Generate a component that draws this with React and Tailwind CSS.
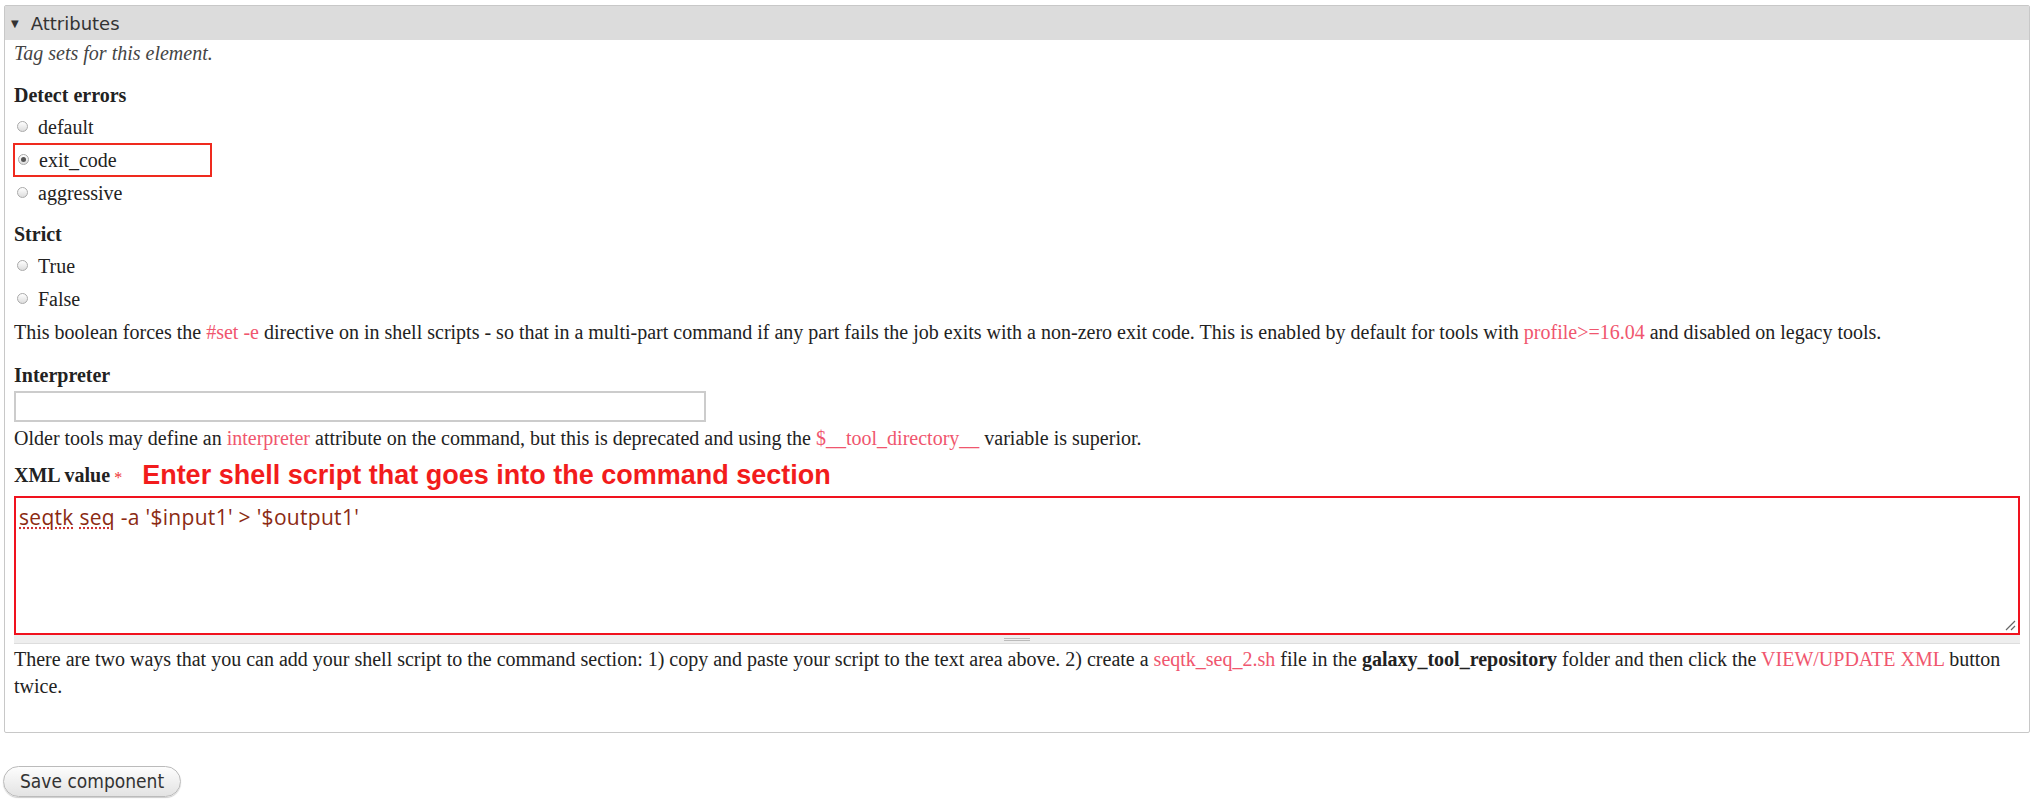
export default function App() {
  const serif = { fontFamily: '"Liberation Serif", "DejaVu Serif", serif' };
  const L = ({ children }) => <span className="text-[#f0566e]">{children}</span>;
  const Radio = ({ label, checked, boxed }) => (
    <div className="flex items-center h-[33px]">
      <div className={`flex items-center h-[34px] pl-[3px] w-[199px] ${boxed ? 'border-2 border-[#ef2a1e] -ml-[1px]' : ''}`}>
        <span className="w-[11px] h-[11px] rounded-full border border-[#aaa] bg-gradient-to-b from-[#fff] to-[#ddd] flex items-center justify-center">
          {checked && <span className="w-[5px] h-[5px] rounded-full bg-[#555]" />}
        </span>
        <span className="ml-[10px] text-[20px] text-[#222]">{label}</span>
      </div>
    </div>
  );
  return (
    <div className="w-[2036px] h-[804px] bg-white text-[20px] text-[#222]" style={serif}>
      <div className="pt-[5px] pl-[4px] pr-[6px]">
        <div className="border border-[#c8c8c8] rounded-[2px] h-[728px] flex flex-col">
          <div className="h-[34px] bg-[#dcdcdc] flex items-center pl-[6px] text-[#333]" style={{ fontFamily: '"DejaVu Sans", sans-serif', fontSize: 18 }}>
            <span className="text-[10px] mr-[12px]">▼</span>Attributes
          </div>
          <div className="px-[9px]">
            <div className="italic text-[#444] h-[28px] leading-[26px]">Tag sets for this element.</div>
            <div className="font-bold mt-[12px] h-[30px] leading-[30px]">Detect errors</div>
            <Radio label="default" />
            <Radio label="exit_code" checked boxed />
            <Radio label="aggressive" />
            <div className="font-bold mt-[10px] h-[30px] leading-[30px]">Strict</div>
            <Radio label="True" />
            <Radio label="False" />
            <div className="h-[34px] leading-[34px]">
              This boolean forces the <L>#set -e</L> directive on in shell scripts - so that in a multi-part command if any part fails the job exits with a non-zero exit code. This is enabled by default for tools with <L>profile&gt;=16.04</L> and disabled on legacy tools.
            </div>
            <div className="font-bold mt-[12px] h-[28px] leading-[28px]">Interpreter</div>
            <div className="w-[692px] h-[31px] border-2 border-[#ccc] mt-[2px]" />
            <div className="h-[32px] leading-[32px]">
              Older tools may define an <L>interpreter</L> attribute on the command, but this is deprecated and using the <L>$__tool_directory__</L> variable is superior.
            </div>
            <div className="flex items-end mt-[6px] h-[30px]">
              <span className="font-bold">XML value</span>
              <span className="text-[#e33] ml-[4px] text-[16px]">*</span>
              <span className="ml-[20px] text-[#f21c1c] font-bold text-[27px] leading-[30px]" style={{ fontFamily: '"Liberation Sans", Arial, sans-serif' }}>
                Enter shell script that goes into the command section
              </span>
            </div>
            <div className="mt-[6px]">
              <div className="relative h-[139px] border-2 border-[#f0121e] pt-[4px] pl-[3px] text-[#8b2a12] text-[21px] tracking-[0.3px]" style={{ fontFamily: '"Open Sans", sans-serif' }}>
                <span className="underline decoration-dotted decoration-[#c33]">seqtk</span>{' '}
                <span className="underline decoration-dotted decoration-[#c33]">seq</span> -a '$input1' &gt; '$output1'
                <svg className="absolute right-[2px] bottom-[2px]" width="12" height="12" viewBox="0 0 12 12">
                  <path d="M11 2 L2 11 M11 7 L7 11" stroke="#666" strokeWidth="1.2" />
                </svg>
              </div>
              <div className="h-[9px] bg-[#eee] border-b border-[#ddd] flex justify-center items-center">
                <div className="w-[26px] h-[3px] border-y border-[#bbb]" />
              </div>
            </div>
            <div className="leading-[27px] mt-[2px]">
              There are two ways that you can add your shell script to the command section: 1) copy and paste your script to the text area above. 2) create a <L>seqtk_seq_2.sh</L> file in the <b>galaxy_tool_repository</b> folder and then click the <L>VIEW/UPDATE XML</L> button twice.
            </div>
          </div>
        </div>
        <button className="mt-[33px] ml-[-1px] h-[31px] px-[16px] rounded-full border border-[#bbb] bg-gradient-to-b from-[#fdfdfd] to-[#e3e3e3] text-[#333] shadow-[0_1px_1px_rgba(0,0,0,0.2)]" style={{ fontFamily: '"DejaVu Sans Condensed", "DejaVu Sans", sans-serif', fontSize: 19 }}>
          Save component
        </button>
      </div>
    </div>
  );
}
